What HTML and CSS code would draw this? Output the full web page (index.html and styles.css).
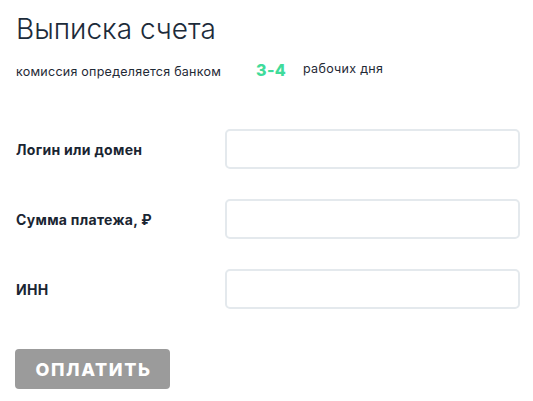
FILE: index.html
```html
<!DOCTYPE html>
<html lang="ru">
<head>
<meta charset="utf-8">
<link rel="stylesheet" href="styles.css">
</head>
<body>
<main class="page">
  <h1 class="title">Выписка счета</h1>
  <div class="info">
    <span class="info-text">комиссия определяется банком</span>
    <span class="days">3-4</span>
    <span class="info-tail">рабочих дня</span>
  </div>
  <form class="form">
    <div class="row">
      <label class="label">Логин или домен</label>
      <input class="field" type="text">
    </div>
    <div class="row">
      <label class="label">Сумма платежа, ₽</label>
      <input class="field" type="text">
    </div>
    <div class="row">
      <label class="label">ИНН</label>
      <input class="field" type="text">
    </div>
    <button class="pay" type="button">ОПЛАТИТЬ</button>
  </form>
</main>
</body>
</html>
```
FILE: styles.css
```css
html, body {
  margin: 0;
  padding: 0;
  background: #ffffff;
}
.page {
  padding: 9px 13px 0 16px;
  font-family: Inter, "Open Sans", sans-serif;
  color: #1b2736;
}
.title {
  margin: 0;
  font-size: 28px;
  font-weight: 300;
  line-height: 40px;
  color: #1c2b3a;
  letter-spacing: 0;
}
.info {
  display: flex;
  align-items: baseline;
  margin-top: 11px;
  height: 22px;
}
.info-text {
  font-size: 12.5px;
  letter-spacing: 0.25px;
  color: #1f2a36;
}
.days {
  margin-left: 35px;
  font-size: 16px;
  font-weight: 800;
  color: #40db9a;
  letter-spacing: 0.3px;
}
.info-tail {
  margin-left: 17px;
  font-size: 12.5px;
  letter-spacing: 0.3px;
  color: #1f2a36;
  position: relative;
  top: -3px;
}
.form {
  margin-top: 47px;
  display: flex;
  flex-direction: column;
  gap: 30px;
}
.row {
  display: flex;
  align-items: center;
}
.label {
  width: 209px;
  font-size: 14px;
  font-weight: 700;
  letter-spacing: 0.3px;
  color: #1a2532;
}
.field {
  box-sizing: border-box;
  width: 295px;
  height: 40px;
  border: 2px solid #e4e9ed;
  border-radius: 5px;
  background: #fff;
  outline: none;
  margin: 0;
}
.pay {
  margin-top: 10px;
  margin-left: -1px;
  width: 155px;
  height: 40px;
  border: 0;
  border-radius: 4px;
  background: #9b9b9b;
  color: #ffffff;
  font-family: Inter, sans-serif;
  font-size: 18px;
  font-weight: 800;
  letter-spacing: 1.6px;
  padding: 0 0 0 2px;
}
```
